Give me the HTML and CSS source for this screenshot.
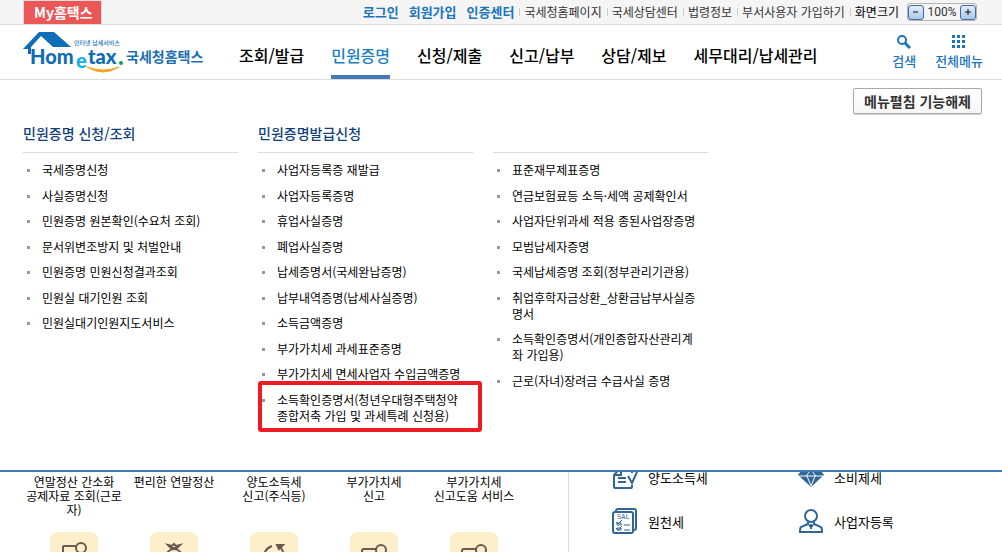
FILE: index.html
```html
<!DOCTYPE html>
<html lang="ko">
<head>
  <meta charset="UTF-8" />
  <meta name="viewport" content="width=device-width, initial-scale=1" />
  <title>국세청 홈택스</title>
  <link rel="stylesheet" href="styles.css">
</head>
<body class="menu-open">

  <div class="topbar">
    <a href="#" class="my">My홈택스</a>
    <div class="top-links">
      <a href="#" class="strong">로그인</a>
      <a href="#" class="strong">회원가입</a>
      <a href="#" class="strong">인증센터</a>
      <ul class="sites">
        <li><a href="#">국세청홈페이지</a></li>
        <li><a href="#">국세상담센터</a></li>
        <li><a href="#">법령정보</a></li>
        <li><a href="#">부서사용자 가입하기</a></li>
        <li class="size">화면크기</li>
      </ul>
      <div class="zoom">
        <button type="button" aria-label="축소"><svg width="8" height="8" viewBox="0 0 8 8"><path d="M1 4h5" /></svg></button>
        <span>100%</span>
        <button type="button" aria-label="확대"><svg width="8" height="8" viewBox="0 0 8 8"><path d="M1 4h6M4 1v6" /></svg></button>
      </div>
    </div>
  </div>

  <header class="header">
    <a href="#" class="logo" aria-label="국세청홈택스">
      <svg width="182" height="46" viewBox="0 0 182 46">
        <path d="M0 19 L16 2 H31 L48 17 H30 L18 6 L8 17 V24 H5 V19 Z" fill="#0f6cb6" />
        <text x="51" y="15" class="logo-small">인터넷 납세서비스</text>
        <text x="7" y="34" class="logo-main">Hom</text>
        <text x="53" y="38" class="logo-e">e</text>
        <text x="65" y="34" class="logo-main">tax</text>
        <circle cx="98" cy="33" r="2" fill="#13a04a" />
        <path d="M64 37 Q80 47 96 37 Q81 43 64 37 Z" fill="#f5a623" stroke="#f5a623" />
        <text x="103" y="32" class="logo-kr">국세청홈택스</text>
      </svg>
    </a>
    <nav class="gnb">
      <a href="#">조회/발급</a>
      <a href="#" class="on">민원증명</a>
      <a href="#">신청/제출</a>
      <a href="#">신고/납부</a>
      <a href="#">상담/제보</a>
      <a href="#">세무대리/납세관리</a>
    </nav>
    <div class="tools">
      <a href="#">
        <svg width="14" height="14" viewBox="0 0 14 14"><circle cx="5" cy="5" r="4" fill="none" stroke="#1b75bb" stroke-width="2" /><path d="M8 8l5 5" stroke="#1b75bb" stroke-width="3" /></svg>
        검색
      </a>
      <a href="#">
        <svg width="14" height="14" viewBox="0 0 14 14" fill="#1b75bb"><path d="M0 0h3v3H0zM5 0h3v3H5zM10 0h3v3h-3zM0 5h3v3H0zM5 5h3v3H5zM10 5h3v3h-3zM0 10h3v3H0zM5 10h3v3H5zM10 10h3v3h-3z" /></svg>
        전체메뉴
      </a>
    </div>

    <div class="mega">
      <div class="mega-top">
        <button type="button">메뉴펼침 기능해제</button>
      </div>
      <div class="mega-cols">
        <section>
          <h2>민원증명 신청/조회</h2>
          <ul>
            <li><a href="#">국세증명신청</a></li>
            <li><a href="#">사실증명신청</a></li>
            <li><a href="#">민원증명 원본확인(수요처 조회)</a></li>
            <li><a href="#">문서위변조방지 및 처벌안내</a></li>
            <li><a href="#">민원증명 민원신청결과조회</a></li>
            <li><a href="#">민원실 대기인원 조회</a></li>
            <li><a href="#">민원실대기인원지도서비스</a></li>
          </ul>
        </section>
        <section>
          <h2>민원증명발급신청</h2>
          <ul>
            <li><a href="#">사업자등록증 재발급</a></li>
            <li><a href="#">사업자등록증명</a></li>
            <li><a href="#">휴업사실증명</a></li>
            <li><a href="#">폐업사실증명</a></li>
            <li><a href="#">납세증명서(국세완납증명)</a></li>
            <li><a href="#">납부내역증명(납세사실증명)</a></li>
            <li><a href="#">소득금액증명</a></li>
            <li><a href="#">부가가치세 과세표준증명</a></li>
            <li><a href="#">부가가치세 면세사업자 수입금액증명</a></li>
            <li class="marked"><a href="#">소득확인증명서(청년우대형주택청약종합저축 가입 및 과세특례 신청용)</a></li>
          </ul>
        </section>
        <section>
          <h2></h2>
          <ul>
            <li><a href="#">표준재무제표증명</a></li>
            <li><a href="#">연금보험료등 소득·세액 공제확인서</a></li>
            <li><a href="#">사업자단위과세 적용 종된사업장증명</a></li>
            <li><a href="#">모범납세자증명</a></li>
            <li><a href="#">국세납세증명 조회(정부관리기관용)</a></li>
            <li><a href="#">취업후학자금상환_상환금납부사실증명서</a></li>
            <li><a href="#">소득확인증명서(개인종합자산관리계좌 가입용)</a></li>
            <li><a href="#">근로(자녀)장려금 수급사실 증명</a></li>
          </ul>
        </section>
      </div>
    </div>
  </header>

  <main class="main">
    <div class="quick">
      <a href="#">
        <span>연말정산 간소화<br>공제자료 조회(근로자)</span>
        <i><svg width="28" height="28" viewBox="0 0 28 28"><path d="M16 4H4q-1 0-1 1v16h22V11" /><circle cx="21" cy="6" r="5" /></svg></i>
      </a>
      <a href="#">
        <span>편리한 연말정산</span>
        <i><svg width="28" height="28" viewBox="0 0 28 28"><path d="M8 3l4 1 2-2 2 2 4-1-3 3h-6z" /><circle cx="14" cy="15" r="8" /></svg></i>
      </a>
      <a href="#">
        <span>양도소득세<br>신고(주식등)</span>
        <i><svg width="28" height="28" viewBox="0 0 28 28"><path d="M4 15q0-8 8-11M17 3l6 0-4 4zM19 4q5 4 5 11" /></svg></i>
      </a>
      <a href="#">
        <span>부가가치세<br>신고</span>
        <i><svg width="28" height="28" viewBox="0 0 28 28"><path d="M17 7H4q-2 0-2 2v14h22V12" /><circle cx="21" cy="8" r="5" /></svg></i>
      </a>
      <a href="#">
        <span>부가가치세<br>신고도움 서비스</span>
        <i><svg width="28" height="28" viewBox="0 0 28 28"><path d="M17 7H4q-2 0-2 2v14h22V12" /><circle cx="21" cy="8" r="5" /></svg></i>
      </a>
    </div>
    <div class="taxes">
      <a href="#">
        <svg width="26" height="26" viewBox="0 0 26 26" class="line"><path d="M20 21v2q0 1-1 1H3q-1 0-1-1V11l6-7h10q2 0 2 2v3M9 4v7H2M6 14h8M6 18h8M16 12l4 7 5-11" /></svg>
        양도소득세
      </a>
      <a href="#">
        <svg width="26" height="26" viewBox="0 0 26 26"><path d="M6 3h14l6 8-13 12L0 11z" fill="#2f6696" /><path d="M1 12h24M8 12l5-6 5 6M9 12l4 10 4-10" fill="none" stroke="#fff" stroke-width="1" /></svg>
        소비제세
      </a>
      <a href="#">
        <svg width="26" height="26" viewBox="0 0 26 26" class="line"><path d="M4 4V3q0-2 2-2h16q2 0 2 2v17q0 2-2 2" /><rect x="1" y="4" width="20" height="21" rx="2" /><path d="M4 14l2 2 4-4M5 15h4v2H5zM4 20l2 2 4-4M5 20h4v2H5zM12 17h6M12 22h6" stroke-width="1" /><text x="5" y="11">SAL</text></svg>
        원천세
      </a>
      <a href="#">
        <svg width="26" height="26" viewBox="0 0 26 26" class="line"><circle cx="13" cy="8" r="6" /><path d="M10 14v2l-7 3q-1 1-1 5h22q0-4-1-5l-7-3v-2M13 16v5M11 17l2 2 2-2" /></svg>
        사업자등록
      </a>
    </div>
  </main>

</body>
</html>
```
FILE: styles.css
```css
* {
  box-sizing: border-box;
}
body {
  margin: 0;
  font-family: "Noto Sans CJK KR", sans-serif;
  font-size: 12px;
  color: #000;
  background: #fff;
}
/* the page behind does not scroll while the menu is open */
.menu-open {
  height: 100vh;
  overflow: hidden;
}
a {
  color: inherit;
  text-decoration: none;
}
ul {
  list-style: none;
  margin: 0;
  padding: 0;
}
button {
  font-family: inherit;
  cursor: pointer;
}

/* top bar */
.topbar {
  display: flex;
  justify-content: space-between;
  height: 25px;
  padding: 0 25px 0 23px;
  background: #f5f5f5;
  border-bottom: 1px solid #dcdcdc;
}
.my {
  padding: 0 8px 0 10px;
  border: 1px solid #ddd;
  border-bottom: 0;
  background: #eb5757;
  color: #fff;
  font-size: 14px;
  font-weight: 700;
  line-height: 22px;
}
.top-links {
  display: flex;
  align-items: center;
  line-height: 24px;
  color: #333;
}
.strong {
  margin-right: 10px;
  color: #1b75bb;
  font-size: 13px;
  font-weight: 700;
}
.strong:nth-child(3) {
  margin-right: 5px;
}
.sites {
  display: flex;
}
.sites li {
  display: flex;
  align-items: center;
  margin-right: 5px;
}
.sites li::before {
  content: "";
  width: 1px;
  height: 8px;
  margin-right: 4px;
  background: #ccc;
}
.sites .size {
  margin-right: 8px;
  color: #000;
}
.zoom {
  display: flex;
  align-items: center;
  justify-content: space-between;
  width: 70px;
  height: 18px;
  border: 1px solid #b5b5b5;
  border-radius: 3px;
  font: 12px Roboto, sans-serif;
}
.zoom button {
  display: flex;
  align-items: center;
  justify-content: center;
  width: 16px;
  height: 15px;
  padding: 0;
  border: 1px solid #44699c;
  border-radius: 3px;
  background: linear-gradient(#e4eefa, #a9c8ea);
}
.zoom path {
  stroke: #111;
}

/* header */
.header {
  position: relative;
  display: flex;
  height: 55px;
  padding: 0 19px 0 23px;
  border-bottom: 1px solid #dcdcdc;
}
.logo {
  padding-top: 5px;
}
.logo-small {
  font-size: 6px;
  font-weight: 500;
  fill: #1b75bb;
}
.logo-main,
.logo-e {
  font-family: Lato, sans-serif;
  font-size: 20px;
  font-weight: 900;
  fill: #0f6cb6;
}
.logo-e {
  fill: #12b0e6;
}
.logo-kr {
  font-size: 14px;
  font-weight: 700;
  fill: #1b6fb3;
}
.gnb {
  display: flex;
  gap: 27px;
  margin-left: 34px;
}
.gnb a {
  padding: 18px 0 8px;
  border-bottom: 4px solid transparent;
  font-size: 16px;
  font-weight: 500;
  line-height: 24px;
}
.gnb .on {
  color: #1b7fc4;
  border-color: #447ab8;
}
.tools {
  display: flex;
  gap: 19px;
  margin-left: auto;
  padding-top: 10px;
}
.tools a {
  color: #1b75bb;
  font-size: 13px;
  font-weight: 500;
  line-height: 18px;
  text-align: center;
}
.tools svg {
  display: block;
  margin: 0 auto 3px;
}

/* open menu, starts under the header border */
.mega {
  position: absolute;
  top: calc(100% + 1px);
  left: 0;
  right: 0;
  padding: 8px 20px 42px 23px;
  background: #fff;
  border-bottom: 2px solid #447ab8;
}
.mega-top {
  display: flex;
  justify-content: flex-end;
}
.mega-top button {
  height: 26px;
  padding: 0 10px;
  border: 1px solid #aaa;
  border-radius: 2px;
  background: linear-gradient(#fff, #f6f6f6);
  box-shadow: 0 1px 1px #ccc;
  color: #333;
  font-size: 14px;
  font-weight: 700;
  line-height: 22px;
}
.mega-cols {
  display: grid;
  grid-template-columns: repeat(4, 1fr);
  gap: 20px;
  margin: 9px 39px 0 0;
}
.mega h2 {
  height: 30px;
  margin: 0 0 4px;
  border-bottom: 1px solid #dcdcdc;
  color: #123f7c;
  font-size: 14px;
  font-weight: 500;
  line-height: 20px;
}
.mega li {
  position: relative;
  padding: 5px 8px 5px 19px;
  line-height: 16px;
  background: linear-gradient(#999, #999) 4px 12px / 3px 3px no-repeat;
}
.mega li:nth-child(even) {
  padding-bottom: 4px;
}
.marked::after {
  content: "";
  position: absolute;
  top: -6px;
  right: -9px;
  bottom: -4px;
  left: 0;
  border: 4px solid #ed1c24;
  border-radius: 3px;
}

/* page content */
.main {
  display: flex;
  padding: 375px 19px 0 24px;
}
.quick {
  display: grid;
  grid-template-columns: repeat(5, 100px);
  flex: 0 0 545px;
  padding-top: 20px;
  border-right: 1px solid #ddd;
  line-height: 14px;
  text-align: center;
}
.quick a {
  display: flex;
  flex-direction: column;
  align-items: center;
}
.quick span {
  min-height: 57px;
  padding: 0 2px;
}
.quick i {
  display: flex;
  align-items: center;
  justify-content: center;
  width: 48px;
  height: 48px;
  border-radius: 8px;
  background: #fdefc9;
}
.quick svg {
  fill: none;
  stroke: #6b5a50;
  stroke-width: 2;
}
.taxes {
  display: grid;
  grid-template-columns: repeat(2, 186px);
  grid-auto-rows: 44px;
  align-content: start;
  padding-left: 43px;
}
.taxes a {
  display: flex;
  align-items: center;
  gap: 10px;
  font-size: 13px;
}
.taxes .line {
  fill: none;
  stroke: #2f6696;
  stroke-width: 2;
}
.taxes text {
  font: 7px "DejaVu Sans Mono", monospace;
  fill: #2f6696;
  stroke: none;
}
```
